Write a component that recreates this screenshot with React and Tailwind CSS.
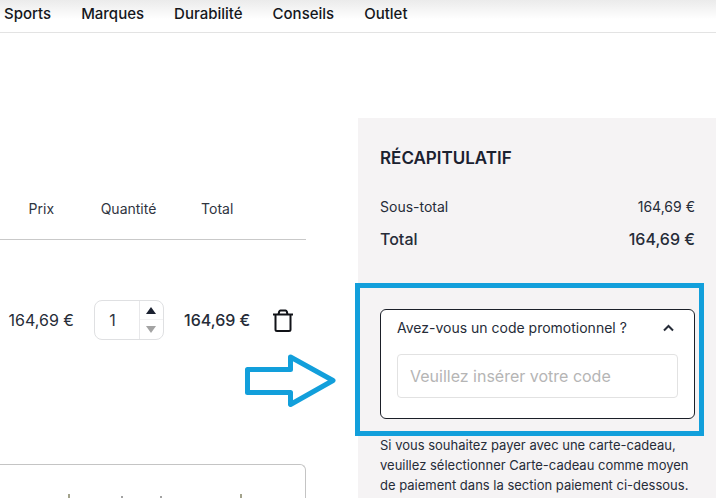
import React, { useState } from 'react';

const NAV_LINKS = ['Sports', 'Marques', 'Durabilité', 'Conseils', 'Outlet'];

const TrashIcon = () => (
    <svg width="20" height="24" viewBox="0 0 20 24" fill="none" stroke="#111318" strokeWidth="2" aria-hidden="true">
        <path d="M0 5.5h20M2.5 5.5v15a1.500 1.500 0 0 0 1.500 1.500h12a1.500 1.500 0 0 0 1.500-1.500V5.5M5.5 5l.8-2.600a1.200 1.200 0 0 1 1.200-.9h5a1.200 1.200 0 0 1 1.200.9l.8 2.600" />
    </svg>
);

const QuantityField = ({ value, onChange }) => (
    <div className="mx-auto flex h-10 w-[70px] rounded-lg border border-[#dfe0e2] bg-white">
        <input
            type="text"
            aria-label="Quantité"
            value={value}
            onChange={(e) => onChange(Number(e.target.value) || 1)}
            className="w-0 flex-1 pr-2 text-center text-base text-[#30353f] outline-none"
        />
        <div className="flex w-6 flex-col border-l border-[#e8e8ea]">
            <button type="button" aria-label="Augmenter" onClick={() => onChange(value + 1)} className="flex flex-1 items-center justify-center border-b border-[#f2f2f3]">
                <svg width="10" height="7" viewBox="0 0 10 7" aria-hidden="true"><path d="M5 0l5 7H0z" fill="#1b2130" /></svg>
            </button>
            <button type="button" aria-label="Diminuer" onClick={() => onChange(Math.max(1, value - 1))} className="flex flex-1 items-center justify-center">
                <svg width="10" height="7" viewBox="0 0 10 7" aria-hidden="true"><path d="M5 7l5-7H0z" fill="#a3a3a3" /></svg>
            </button>
        </div>
    </div>
);

const CartTable = () => {
    const [quantity, setQuantity] = useState(1);

    return (
        <table className="w-full table-fixed text-center">
            <thead>
                <tr className="h-[60px] border-b border-[#c9c9c9] text-sm text-[#30353f]">
                    <th scope="col" className="w-[27%] font-normal">Prix</th>
                    <th scope="col" className="w-[30%] font-normal">Quantité</th>
                    <th scope="col" className="w-[28%] font-normal">Total</th>
                    <td className="w-[15%]"></td>
                </tr>
            </thead>
            <tbody>
                <tr className="h-[161px] text-base text-[#262c38]">
                    <td>164,69 €</td>
                    <td><QuantityField value={quantity} onChange={setQuantity} /></td>
                    <td className="font-medium">164,69 €</td>
                    <td>
                        <button type="button" aria-label="Supprimer" className="align-middle"><TrashIcon /></button>
                    </td>
                </tr>
            </tbody>
        </table>
    );
};

const PromoCode = () => {
    const [open, setOpen] = useState(true);

    return (
        <div className="relative mt-[54px]">
            <div className="rounded-md border border-[#1b1f28] bg-white px-4 pb-5">
                <button
                    type="button"
                    aria-expanded={open}
                    onClick={() => setOpen(!open)}
                    className="flex w-full items-center justify-between py-2 text-sm text-[#262c38]"
                >
                    Avez-vous un code promotionnel ?
                    <svg width="18" height="10" viewBox="0 0 18 10" fill="none" stroke="#262c38" strokeWidth="2" aria-hidden="true"><path d="M4 7.5l4.500-4.500 4.500 4.500" /></svg>
                </button>
                {open && (
                    <input
                        type="text"
                        aria-label="Code promotionnel"
                        placeholder="Veuillez insérer votre code"
                        className="mt-2 h-11 w-full rounded-sm border border-[#e2e2e2] bg-white px-3 text-base outline-none placeholder:text-[#b5b5b5]"
                    />
                )}
            </div>
            {/* highlight frame round the promo block */}
            <div className="pointer-events-none absolute -top-[26px] -right-[9px] -bottom-[17px] -left-[25px] border-[5px] border-[#129fdb]"></div>
        </div>
    );
};

const Summary = () => (
    <aside className="w-1/2 bg-[#f5f3f4] pt-6 pr-[21px] pl-[22px]">
        <h2 className="text-[17px] leading-8 font-semibold text-[#1b2130]">RÉCAPITULATIF</h2>
        <dl className="mt-[17px] text-[#262c38]">
            <div className="flex h-8 items-center justify-between text-sm">
                <dt>Sous-total</dt>
                <dd>164,69 €</dd>
            </div>
            <div className="flex h-8 items-center justify-between text-base font-medium">
                <dt>Total</dt>
                <dd>164,69 €</dd>
            </div>
        </dl>
        <PromoCode />
        <p className="mt-4 text-[13px] leading-5 text-[#262c38]">
            Si vous souhaitez payer avec une carte-cadeau, veuillez sélectionner Carte-cadeau comme moyen de paiement dans la section paiement ci-dessous.
        </p>
    </aside>
);

const App = () => (
    <div className="flex h-screen flex-col overflow-hidden bg-white font-['Inter',sans-serif]">
        <header className="border-b border-[#e3e3e3] bg-linear-to-b from-[#ebebeb] to-white to-60%">
            <nav className="flex h-8 items-center gap-[30px] px-1 pb-1 text-[15px] font-medium text-[#15171c]">
                {NAV_LINKS.map((link) => (
                    <a key={link} href="#">{link}</a>
                ))}
            </nav>
        </header>

        <main className="flex flex-1 pt-[85px]">
            <section className="flex w-1/2 flex-col pt-[61px] pr-[52px]">
                <CartTable />
                <div className="relative mt-16 flex-1 rounded-tr-md border-t border-r border-[#c4c4c4]">
                    {/* tops of the payment logos, cut off at the fold */}
                    <svg className="absolute bottom-0 left-0" width="300" height="4" viewBox="0 0 300 4" aria-hidden="true">
                        <path d="M69 0v4M241 0v4" stroke="#a3a38c" strokeWidth="2" />
                        <path d="M122 2v2M161 2v2" stroke="#a3a3a3" strokeWidth="2" />
                    </svg>
                </div>
                <svg className="absolute top-[353px] left-[244px]" width="94" height="56" viewBox="0 0 94 56" fill="none" stroke="#129fdb" strokeWidth="5" strokeLinejoin="round" aria-hidden="true">
                    <path d="M3.500 16.500H46.500V4L89 27.500 46.500 51.500V39.500H3.500z" />
                </svg>
            </section>
            <Summary />
        </main>
    </div>
);

export default App;
